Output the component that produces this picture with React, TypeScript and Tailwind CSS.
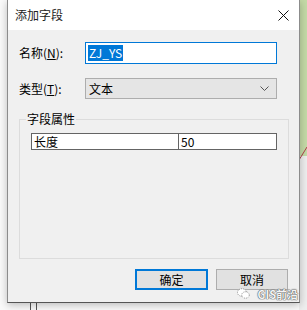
import React from "react";

const font = {
  fontFamily: '"Noto Sans CJK SC", "Noto Sans", sans-serif',
};

function CloseIcon() {
  return (
    <svg width="11" height="11" viewBox="0 0 11 11">
      <path d="M0.5 0.5 L10.5 10.5 M10.5 0.5 L0.5 10.5" stroke="#111" strokeWidth="1" />
    </svg>
  );
}

function Chevron() {
  return (
    <svg width="9" height="5" viewBox="0 0 9 5">
      <path d="M0.5 0.5 L4.5 4.5 L8.5 0.5" stroke="#555" strokeWidth="1" fill="none" />
    </svg>
  );
}

export default function App() {
  return (
    <div
      className="relative w-[307px] h-[310px] bg-[#fafafa] overflow-hidden text-[12px] text-black"
      style={font}
    >
      {/* map canvas behind the dialog */}
      <svg className="absolute inset-0" width="307" height="310">
        <rect x="299" y="0" width="8" height="156" fill="#c4daa6" />
        <rect x="299" y="156" width="8" height="154" fill="#eeeeee" />
        <path d="M299 160 L307 147" stroke="#b0404a" strokeWidth="1" />
        <path d="M30.5 302 V310 M36.5 302 V310" stroke="#555" strokeWidth="1" />
      </svg>

      <div className="relative ml-[7px] w-[293px] h-[303px] flex flex-col border border-t-0 border-[#8c8c8c] border-b-[#555] shadow-[0_2px_8px_rgba(0,0,0,0.25)]">
        <div className="h-[30px] bg-white flex items-center justify-between pl-[7px] pr-[10px]">
          <span className="text-[12px] text-[#222]">添加字段</span>
          <CloseIcon />
        </div>

        <div className="flex-1 bg-[#f0f0f0] flex flex-col pl-[11px] pr-[10px] pt-[12px]">
          <div className="flex items-center h-[22px]">
            <span className="w-[66px]">
              名称(<u>N</u>):
            </span>
            <div className="w-[192px] h-[22px] border border-[#0078d7] bg-white flex items-center pl-[2px]">
              <span className="bg-[#0078d7] text-white px-[1px] leading-[16px]">ZJ_YS</span>
            </div>
          </div>

          <div className="flex items-center h-[21px] mt-[14px]">
            <span className="w-[66px]">
              类型(<u>T</u>):
            </span>
            <div className="w-[192px] h-[21px] border border-[#adadad] bg-[#e5e5e5] flex items-center justify-between pl-[3px] pr-[7px]">
              <span>文本</span>
              <Chevron />
            </div>
          </div>

          <fieldset className="mt-[12px] h-[148px] border border-[#dcdcdc]">
            <legend className="ml-[6px] px-[1px] leading-[16px]">字段属性</legend>
            <div className="pl-[11px] pt-[6px]">
              <div className="w-[246px] h-[17px] border border-[#646464] bg-white flex">
                <div className="w-[147px] border-r border-[#646464] pl-[2px] leading-[15px]">长度</div>
                <div className="flex-1 pl-[2px] leading-[15px]">50</div>
              </div>
            </div>
          </fieldset>

          <div className="flex justify-end gap-[8px] mt-[10px] mr-[1px]">
            <button className="w-[73px] h-[21px] border-2 border-[#0078d7] bg-[#e1e1e1] leading-none">
              确定
            </button>
            <button className="w-[72px] h-[21px] border border-[#adadad] bg-[#e1e1e1] leading-none">
              取消
            </button>
          </div>
        </div>
      </div>

      {/* watermark */}
      <div className="absolute right-[9px] bottom-[8px] flex items-center gap-[8px] text-[#f4f4f4] text-[11px] font-bold [text-shadow:0_0_1px_#555,0_0_1px_#555,0_0_1px_#555]">
        <svg width="13" height="11" viewBox="0 0 13 11">
          <ellipse cx="5" cy="4.5" rx="4.5" ry="3.8" fill="#fff" stroke="#777" strokeWidth="0.8" strokeDasharray="1 1" />
          <ellipse cx="8.5" cy="7" rx="3.8" ry="3.2" fill="#fff" stroke="#777" strokeWidth="0.8" strokeDasharray="1 1" />
        </svg>
        <span>GIS前沿</span>
      </div>
    </div>
  );
}
